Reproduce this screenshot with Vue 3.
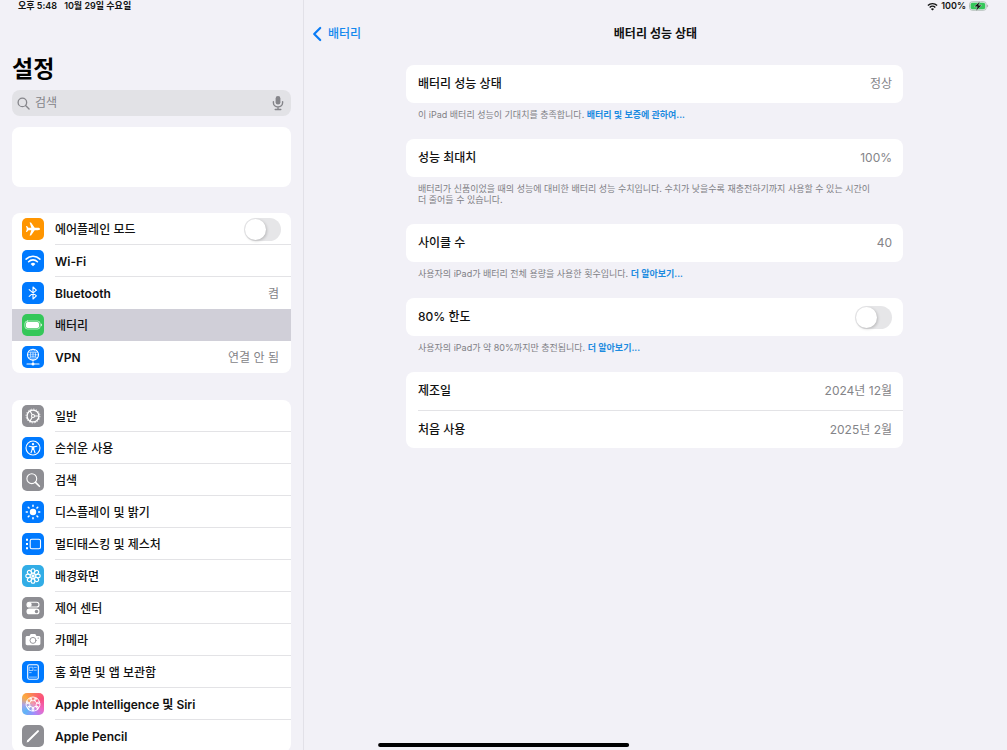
<script setup>
import { ref } from 'vue'

const airplane = ref(false)
const limit80 = ref(false)
const query = ref('')

const connectivity = [
  { id: 'airplane', label: '에어플레인 모드', tone: 'orange', toggle: true },
  { id: 'wifi', label: 'Wi-Fi', tone: 'blue', latin: true },
  { id: 'bluetooth', label: 'Bluetooth', tone: 'blue', value: '켬', latin: true },
  { id: 'battery', label: '배터리', tone: 'green', selected: true },
  { id: 'vpn', label: 'VPN', tone: 'blue', value: '연결 안 됨', latin: true },
]

const general = [
  { id: 'general', label: '일반', tone: 'gray' },
  { id: 'access', label: '손쉬운 사용', tone: 'blue' },
  { id: 'search', label: '검색', tone: 'gray' },
  { id: 'display', label: '디스플레이 및 밝기', tone: 'blue' },
  { id: 'multitask', label: '멀티태스킹 및 제스처', tone: 'blue' },
  { id: 'wallpaper', label: '배경화면', tone: 'cyan' },
  { id: 'control', label: '제어 센터', tone: 'gray' },
  { id: 'camera', label: '카메라', tone: 'gray' },
  { id: 'home', label: '홈 화면 및 앱 보관함', tone: 'blue' },
  { id: 'siri', label: 'Apple Intelligence 및 Siri', tone: 'rainbow', latin: true },
  { id: 'pencil', label: 'Apple Pencil', tone: 'gray', latin: true },
]

const groups = [connectivity, general]
const petals = [0, 45, 90, 135, 180, 225, 270, 315]
const loops = [0, 51, 103, 154, 206, 257, 309]
</script>

<template>
  <div class="screen">
    <aside class="sidebar">
      <div class="status status-left">
        <span>오후 5:48</span>
        <span>10월 29일 수요일</span>
      </div>
      <h1 class="title">설정</h1>

      <label class="search">
        <svg class="search-glass" viewBox="0 0 14 14" aria-hidden="true">
          <circle cx="5.8" cy="5.8" r="4.6" />
          <path d="M9.2 9.2 13 13" />
        </svg>
        <input v-model="query" type="search" placeholder="검색" aria-label="검색" />
        <svg class="mic" viewBox="0 0 12 16" aria-hidden="true">
          <rect class="mic-body" x="3.6" y="1" width="4.8" height="8.6" rx="2.4" />
          <path d="M1.4 6.6v1.1a4.6 4.2 0 0 0 9.2 0V6.6M6 12v2.4M3.2 14.5h5.6" />
        </svg>
      </label>

      <div class="account"></div>

      <nav v-for="(group, g) in groups" :key="g" class="group">
        <component
          :is="item.toggle ? 'label' : 'a'"
          v-for="item in group"
          :key="item.id"
          :href="item.toggle ? undefined : '#' + item.id"
          class="row"
          :class="{ selected: item.selected }"
        >
          <span class="icon" :class="item.tone">
            <svg viewBox="0 0 22 22" aria-hidden="true">
              <path v-if="item.id === 'airplane'" class="fill"
                d="M18 11c0-.8-1-1.2-2.1-1.2h-3.200L9 4.400H7.600L9.300 9.800H6.400L5 8.100H4L4.800 11 4 13.900h1l1.400-1.700h2.900L7.600 17.600H9l3.700-5.400h3.200C17 12.200 18 11.800 18 11z" />
              <g v-else-if="item.id === 'wifi'">
                <path class="bold" d="M4.100 9.100a9.800 9.800 0 0 1 13.800 0M6.600 11.700a6.300 6.300 0 0 1 8.800 0" />
                <path class="fill" d="M11 16.300 8.600 13.900a3.400 3.400 0 0 1 4.800 0z" />
              </g>
              <path v-else-if="item.id === 'bluetooth'" class="line" d="M7.200 7.700l7.200 6.100L11 17V5l3.400 3.200-7.200 6.100" />
              <g v-else-if="item.id === 'battery'">
                <rect class="thin" x="2.900" y="7" width="15.200" height="8" rx="2.600" />
                <rect class="fill" x="4" y="8.100" width="13" height="5.800" rx="1.600" />
                <path class="fill" d="M18.900 9.600c1.300.5 1.300 2.300 0 2.800z" />
              </g>
              <g v-else-if="item.id === 'vpn'">
                <circle class="line" cx="11" cy="8.800" r="5.500" />
                <ellipse class="thin" cx="11" cy="8.800" rx="2.600" ry="5.500" />
                <path class="thin" d="M11 3.300v13.500M5.500 8.800h11M6.500 6c2.600 1.300 6.400 1.300 9 0M6.500 11.600c2.600-1.300 6.400-1.300 9 0" />
                <path class="line" d="M5 18h12" />
                <circle class="fill" cx="11" cy="18" r="1.500" />
              </g>
              <g v-else-if="item.id === 'general'">
                <circle class="teeth" cx="11" cy="11" r="6.900" />
                <circle class="ring" cx="11" cy="11" r="5.900" />
                <circle class="line" cx="11" cy="11" r="1.500" />
                <path class="line" d="M12.700 11h4.200M10.100 9.500 8 5.900M10.100 12.500 8 16.100" />
              </g>
              <g v-else-if="item.id === 'access'">
                <circle class="line" cx="11" cy="11" r="7" />
                <circle class="fill" cx="11" cy="7.100" r="1.200" />
                <path class="line" d="M7.200 9.200l3 .7h1.600l3-.7M10.200 10v2.400L9 15.700M11.800 10v2.400l1.200 3.300M11 10v2.500" />
              </g>
              <g v-else-if="item.id === 'search'">
                <circle class="line" cx="9.800" cy="9.700" r="4.900" />
                <path class="bold" d="M13.500 13.400l3.900 3.900" />
              </g>
              <g v-else-if="item.id === 'display'">
                <circle class="fill" cx="11" cy="11" r="3.200" />
                <path class="bold" d="M11 4.300v1M11 16.700v1M4.300 11h1M16.700 11h1M6.300 6.300l.7.7M15 15l.7.7M6.300 15.700l.7-.7M15 7l.7-.7" />
              </g>
              <g v-else-if="item.id === 'multitask'">
                <rect class="line" x="8.200" y="6.200" width="10.300" height="9.600" rx="1.600" />
                <path class="fill" d="M4 5.700h2v2H4zM4 10h2v2H4zM4 14.300h2v2H4z" />
              </g>
              <g v-else-if="item.id === 'wallpaper'">
                <ellipse v-for="p in petals" :key="p" class="line" cx="11" cy="6.100" rx="1.900" ry="2.300"
                  :transform="`rotate(${p} 11 11)`" />
                <path class="thin" d="M11 8v6M8 11h6M8.900 8.900l4.200 4.200M13.100 8.900l-4.200 4.200" />
                <circle class="fill" cx="11" cy="11" r="1.500" />
              </g>
              <g v-else-if="item.id === 'control'">
                <rect class="line" x="5" y="5.300" width="12" height="4.700" rx="2.350" />
                <circle class="fill" cx="7.400" cy="7.650" r="2.300" />
                <rect class="fill" x="4.500" y="11.600" width="13" height="5.700" rx="2.850" />
                <circle class="gray-fill" cx="14.500" cy="14.450" r="1.700" />
              </g>
              <g v-else-if="item.id === 'camera'">
                <path class="fill" d="M5.200 6.900h2.300l.9-1.400c.2-.3.400-.4.800-.4h3.600c.4 0 .6.100.8.400l.9 1.400h2.300c1 0 1.600.6 1.600 1.600v6.100c0 1-.6 1.600-1.600 1.600H5.200c-1 0-1.600-.6-1.600-1.600V8.500c0-1 .6-1.600 1.600-1.600z" />
                <circle class="lens" cx="11" cy="11.400" r="3" />
                <circle class="gray-fill" cx="16.200" cy="9.100" r=".7" />
              </g>
              <g v-else-if="item.id === 'home'">
                <rect class="line" x="5.700" y="3.700" width="10.600" height="14.600" rx="1.500" />
                <path class="thin" d="M7.500 16.100h7M7.600 6.200h3.300v3.300H7.600zM12.200 6.400h2.100M12.200 9.200h2.100M7.600 11.600h1.600" />
              </g>
              <g v-else-if="item.id === 'siri'">
                <ellipse v-for="p in loops" :key="p" class="loop" cx="11" cy="5.900" rx="3.300" ry="1.900"
                  :transform="`rotate(${p} 11 11)`" />
              </g>
              <g v-else>
                <path class="pencil" d="M6.200 15.800 16 6.100" />
                <path class="fill" d="M4.600 17.500l.8-2.400 1.600 1.600z" />
              </g>
            </svg>
          </span>
          <span class="row-body">
            <span :class="{ latin: item.latin }">{{ item.label }}</span>
            <span v-if="item.value" class="value">{{ item.value }}</span>
            <input v-if="item.toggle" v-model="airplane" class="switch" type="checkbox" role="switch" />
          </span>
        </component>
      </nav>
    </aside>

    <main class="detail">
      <div class="status status-right">
        <svg class="status-wifi" viewBox="0 0 11 9" aria-hidden="true">
          <path d="M.9 3.500a6.600 6.600 0 0 1 9.200 0M2.700 5.400a4 4 0 0 1 5.600 0" />
          <path class="dot" d="M5.500 8.600 3.900 7a2.300 2.300 0 0 1 3.200 0z" />
        </svg>
        <span>100%</span>
        <svg class="status-battery" viewBox="0 0 20 10" aria-hidden="true">
          <rect class="shell" x=".5" y=".7" width="16.800" height="8.600" rx="2.800" />
          <rect class="charge" x="1.600" y="1.800" width="14.600" height="6.400" rx="1.800" />
          <path class="nub" d="M18.200 3.600c1.300.4 1.300 2.400 0 2.800z" />
          <path class="bolt" d="M11 .2 5 5.700h3.300L6.900 9.900l6-5.700H9.600z" />
        </svg>
      </div>

      <header class="bar">
        <a class="back" href="#battery">
          <svg viewBox="0 0 10 16" aria-hidden="true"><path d="M8.200 2 2.200 8l6 6" /></svg>
          배터리
        </a>
        <h2>배터리 성능 상태</h2>
      </header>

      <div class="sections">
        <section>
          <div class="card">
            <div class="line-item"><span>배터리 성능 상태</span><span class="value">정상</span></div>
          </div>
          <p>이 iPad 배터리 성능이 기대치를 충족합니다. <a href="#warranty">배터리 및 보증에 관하여...</a></p>
        </section>
        <section>
          <div class="card">
            <div class="line-item"><span>성능 최대치</span><span class="value">100%</span></div>
          </div>
          <p>배터리가 신품이었을 때의 성능에 대비한 배터리 성능 수치입니다. 수치가 낮을수록 재충전하기까지 사용할 수 있는 시간이 더 줄어들 수 있습니다.</p>
        </section>
        <section>
          <div class="card">
            <div class="line-item"><span>사이클 수</span><span class="value">40</span></div>
          </div>
          <p>사용자의 iPad가 배터리 전체 용량을 사용한 횟수입니다. <a href="#cycles">더 알아보기...</a></p>
        </section>
        <section>
          <div class="card">
            <label class="line-item">
              <span>80% 한도</span>
              <input v-model="limit80" class="switch" type="checkbox" role="switch" />
            </label>
          </div>
          <p>사용자의 iPad가 약 80%까지만 충전됩니다. <a href="#limit">더 알아보기...</a></p>
        </section>
        <section>
          <div class="card">
            <div class="line-item"><span>제조일</span><span class="value">2024년 12월</span></div>
            <div class="line-item"><span>처음 사용</span><span class="value">2025년 2월</span></div>
          </div>
        </section>
      </div>
    </main>

    <div class="home-indicator"></div>
  </div>
</template>

<style>
body {
  background: #f2f1f7;
}
</style>

<style scoped>
.screen {
  display: flex;
  height: 100vh;
  overflow: hidden;
  background: #f2f1f7;
  color: #111;
  font: 500 12px/16px Inter, "Noto Sans CJK KR", sans-serif;
}
.screen * {
  box-sizing: border-box;
}
a {
  color: inherit;
  text-decoration: none;
}
h1,
h2,
p {
  margin: 0;
}

.sidebar {
  flex: 0 0 304px;
  padding: 0 12px;
  border-right: 1px solid #e2e1e8;
  overflow: hidden;
}
.status {
  display: flex;
  align-items: center;
  height: 12px;
  font-size: 9px;
  line-height: 12px;
  font-weight: 600;
  color: #111;
}
.status-left {
  gap: 7px;
  padding-left: 6px;
}
.title {
  margin-top: 41px;
  font-size: 23px;
  line-height: 32px;
  font-weight: 700;
  color: #000;
}
.search {
  display: flex;
  align-items: center;
  height: 26px;
  margin-top: 5px;
  padding: 0 7px 0 5px;
  border-radius: 8px;
  background: #e2e2e6;
}
.search input {
  flex: 1;
  min-width: 0;
  padding: 0 0 0 5px;
  border: 0;
  outline: 0;
  background: none;
  font: inherit;
  font-weight: 400;
  color: #111;
}
.search input::placeholder {
  color: #848489;
  opacity: 1;
}
.search svg {
  fill: none;
  stroke: #85858a;
  stroke-width: 1.4;
  stroke-linecap: round;
}
.search-glass {
  width: 13px;
  height: 13px;
}
.mic {
  width: 12px;
  height: 16px;
}
.search .mic-body {
  fill: #85858a;
  stroke: none;
}
.account {
  height: 60px;
  margin-top: 11px;
  border-radius: 8px;
  background: #fff;
}
.group {
  margin-top: 26px;
  border-radius: 8px;
  background: #fff;
  overflow: hidden;
}
.group + .group {
  margin-top: 27px;
}
.row {
  display: flex;
  align-items: center;
  height: 32px;
  padding-left: 10px;
}
.icon {
  flex: none;
  width: 22px;
  height: 22px;
  margin-right: 11px;
  border-radius: 5px;
}
.row-body {
  flex: 1;
  display: flex;
  align-items: center;
  justify-content: space-between;
  height: 32px;
  padding: 2px 12px 0 0;
  border-bottom: 1px solid #e3e3e6;
}
.row:has(.switch) .row-body {
  padding-right: 10px;
}
.row:last-child .row-body,
.row.selected .row-body,
.row:has(+ .selected) .row-body {
  border-color: transparent;
}
.selected {
  background: #d0cfd8;
}
.latin {
  font-weight: 600;
}
.value {
  font-weight: 400;
  color: #848488;
}

.icon svg {
  display: block;
  width: 22px;
  height: 22px;
  fill: none;
  stroke: none;
  stroke-linecap: round;
  stroke-linejoin: round;
}
.orange { background: #ff9500; }
.blue { background: #007aff; }
.green { background: #34c759; }
.gray { background: #8e8e93; }
.cyan { background: #32ade6; }
.rainbow {
  background:
    radial-gradient(circle at 50% 50%, #ee9ab8 0, transparent 45%),
    conic-gradient(from 0deg, #fb7a5c, #fa4f7e 60deg, #ee67c5 120deg, #a78bfa 170deg, #5fb4f7 225deg, #a9a3e8 265deg, #fdab3d 310deg, #fb7a5c);
}
.icon .fill { fill: #fff; }
.icon .gray-fill { fill: #8e8e93; }
.icon .line { stroke: #fff; stroke-width: 1.1; }
.icon .loop { stroke: #fff; stroke-width: 0.9; }
.icon .thin { stroke: #fff; stroke-width: 0.6; }
.icon .ring { stroke: #fff; stroke-width: 1.3; }
.icon .bold { stroke: #fff; stroke-width: 1.6; }
.icon .pencil { stroke: #fff; stroke-width: 2; }
.icon .lens { stroke: #8e8e93; stroke-width: 0.9; }
.icon .teeth { stroke: #fff; stroke-width: 1; stroke-dasharray: 1.3 1.41; stroke-linecap: butt; }

.switch {
  appearance: none;
  flex: none;
  width: 37px;
  height: 23px;
  margin: 0;
  padding: 1px;
  border-radius: 12px;
  background: #e6e6e8;
}
.switch::before {
  content: "";
  display: block;
  width: 21px;
  height: 21px;
  border-radius: 50%;
  background: #fff;
  box-shadow: 1px 1px 3px rgba(0, 0, 0, 0.2);
}
.switch:checked {
  background: #34c759;
}
.switch:checked::before {
  margin-left: auto;
}

.detail {
  flex: 1;
  min-width: 0;
}
.status-right {
  justify-content: flex-end;
  padding-right: 18px;
}
.status-wifi {
  width: 11px;
  height: 9px;
  margin-right: 3px;
  fill: none;
  stroke: #111;
  stroke-width: 1.4;
}
.status-wifi .dot {
  fill: #111;
  stroke: none;
}
.status-battery {
  width: 20px;
  height: 10px;
  margin-left: 3px;
}
.shell { fill: #e4f1e9; stroke: #a9b5b0; stroke-width: 0.8; }
.charge { fill: #34c759; }
.nub { fill: #a5a5aa; }
.bolt { fill: #111; stroke: #e4f1e9; stroke-width: 0.4; }

.bar {
  display: grid;
  grid-template-columns: 1fr auto 1fr;
  align-items: center;
  height: 43px;
  padding: 0 8px;
}
.back {
  display: flex;
  align-items: center;
  gap: 6px;
  color: #1488ee;
}
.back svg {
  width: 10px;
  height: 16px;
  fill: none;
  stroke: #0a7cf5;
  stroke-width: 2.2;
  stroke-linecap: round;
  stroke-linejoin: round;
}
h2 {
  font-size: 12px;
  line-height: 16px;
  font-weight: 600;
}
.sections {
  padding: 10px 104px 0 102px;
}
.card {
  border-radius: 8px;
  background: #fff;
}
.line-item {
  display: flex;
  align-items: center;
  justify-content: space-between;
  height: 38px;
  margin-left: 12px;
  padding-right: 11px;
}
.line-item + .line-item {
  border-top: 1px solid #e3e3e6;
}
section p {
  padding: 6px 30px 19px 12px;
  font-size: 9px;
  line-height: 11px;
  font-weight: 400;
  color: #808085;
  word-break: keep-all;
}
section p a {
  font-weight: 600;
  color: #1c8be0;
}
.home-indicator {
  position: fixed;
  left: 50%;
  bottom: 3px;
  width: 25%;
  height: 4px;
  border-radius: 2px;
  background: #000;
  transform: translateX(-50%);
}
</style>
